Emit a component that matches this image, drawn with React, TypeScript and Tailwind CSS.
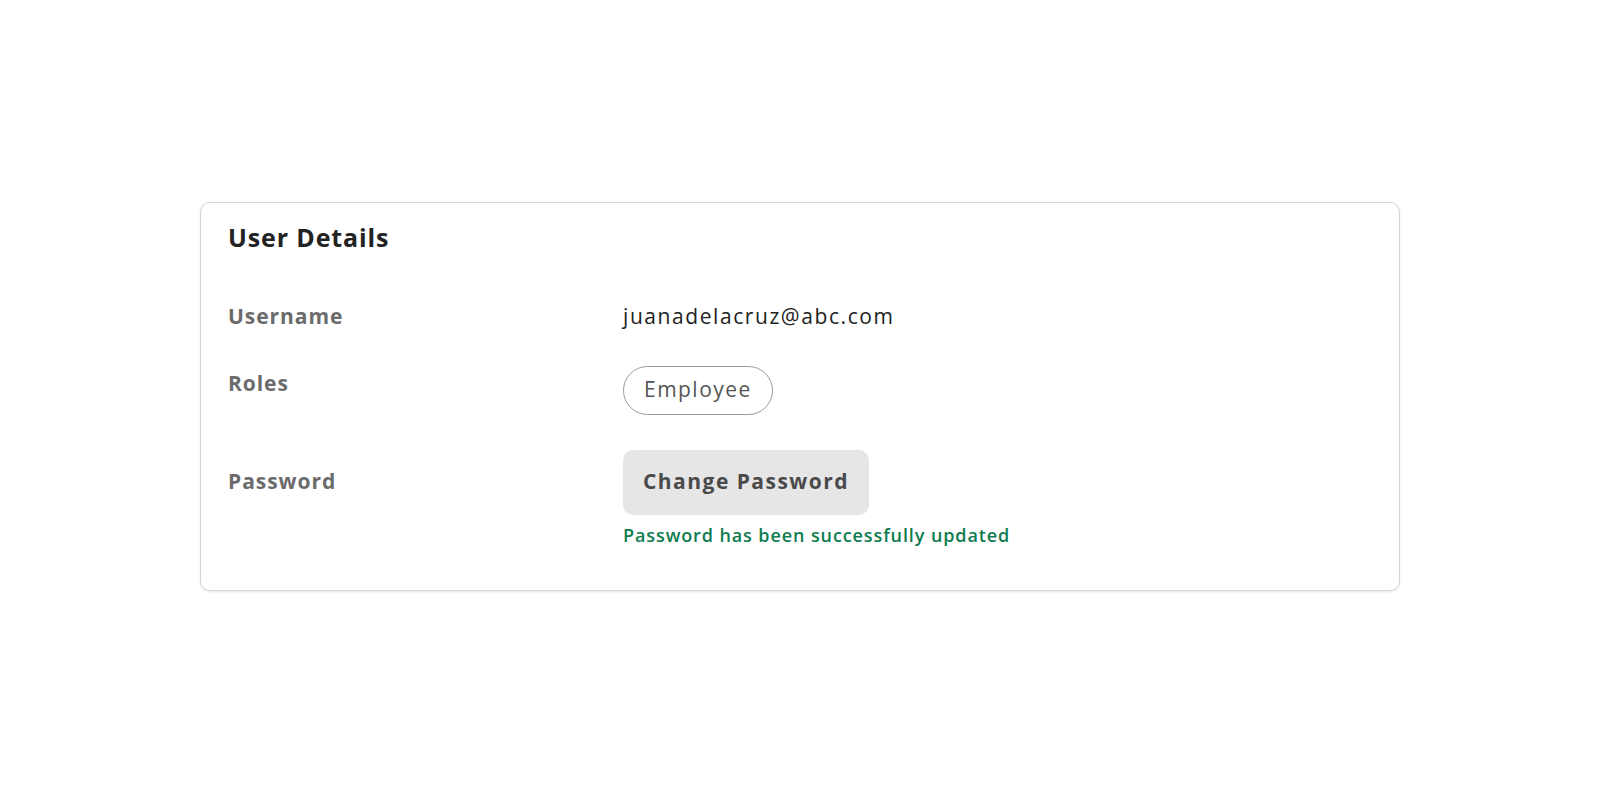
export default function App() {
  return (
    <div className="flex min-h-screen items-center justify-center bg-white font-['Open_Sans','Noto_Sans',sans-serif]">
      <div className="w-[1200px] rounded-[10px] border border-[#d6d6d6] bg-white px-[27px] pb-[43px] pt-[17px] shadow-[0_1px_3px_rgba(0,0,0,0.1)]">
        <h2 className="text-[25px] font-bold leading-[34px] tracking-[0.035em] text-[#222]">User Details</h2>

        <div className="mt-[48px] grid grid-cols-[395px_1fr]">
          <div className="text-[21px] font-bold leading-[28px] tracking-[0.045em] text-[#6b6b6b]">Username</div>
          <div className="text-[21px] leading-[28px] tracking-[0.075em] text-[#222]">juanadelacruz@abc.com</div>
        </div>

        <div className="mt-[36px] grid grid-cols-[395px_1fr]">
          <div className="pt-[3px] text-[21px] font-bold leading-[28px] tracking-[0.045em] text-[#6b6b6b]">Roles</div>
          <div>
            <span className="inline-flex h-[49px] items-center rounded-full border border-[#9a9a9a] px-[20px] text-[21px] tracking-[0.07em] text-[#555]">
              Employee
            </span>
          </div>
        </div>

        <div className="mt-[35px] grid grid-cols-[395px_1fr]">
          <div className="pt-[17px] text-[21px] font-bold leading-[28px] tracking-[0.045em] text-[#6b6b6b]">Password</div>
          <div className="flex flex-col items-start">
            <button className="h-[65px] rounded-[10px] bg-[#e6e6e6] px-[20px] text-[21px] font-bold tracking-[0.07em] text-[#4a4a4a]">
              Change Password
            </button>
            <p className="mt-[8px] text-[18px] font-semibold leading-[24px] tracking-[0.05em] text-[#0e7c4f]">
              Password has been successfully updated
            </p>
          </div>
        </div>
      </div>
    </div>
  )
}
